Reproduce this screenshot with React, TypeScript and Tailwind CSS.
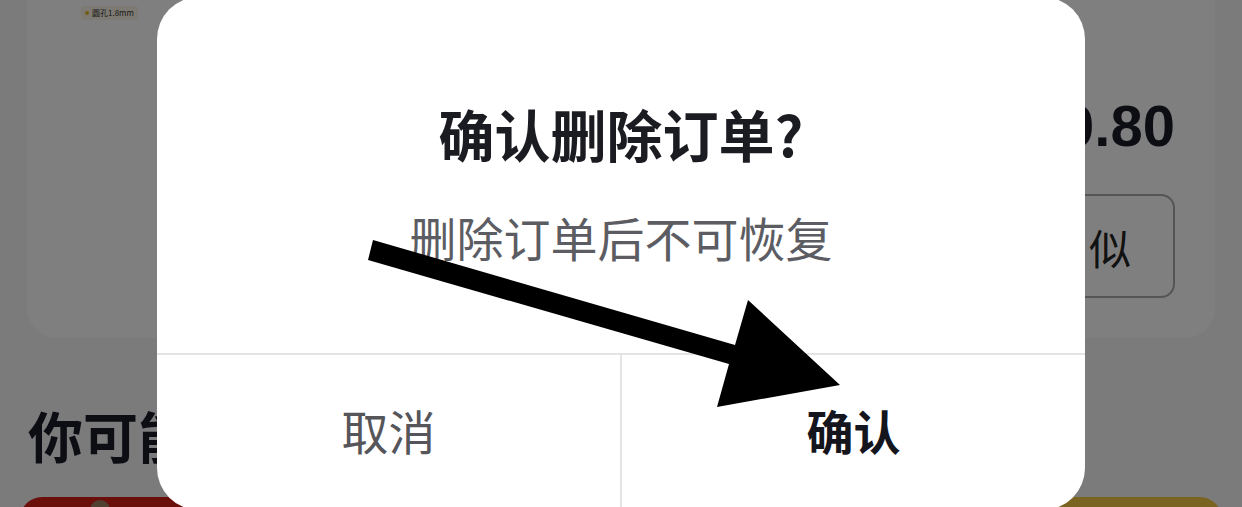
import React from "react";

const cjk = "font-['Noto_Sans_CJK_SC','Noto_Sans',sans-serif]";

function OrderCard() {
  return (
    <div className="mx-[27px] mt-[-60px] flex flex-col rounded-[30px] bg-white pt-[66px] pb-[40px]">
      <div className="ml-[54px] flex h-[14px] w-fit items-center gap-[3px] rounded-[3px] bg-[#fbf5e6] px-[4px]">
        <span className="h-[4px] w-[4px] rounded-full bg-[#e8b628]" />
        <span className="text-[8px] leading-none text-[#333]">圆孔1.8mm</span>
      </div>
      <div className="mt-[78px] self-end pr-[40px] font-['Liberation_Sans',sans-serif] text-[58px] font-bold leading-[56px] text-[#1a1a28]">
        ¥10.80
      </div>
      <button className="mt-[40px] mr-[40px] flex h-[104px] items-center self-end rounded-[14px] border-2 border-[#aaaaaa] pl-[44px] pr-[36px] text-[42px] tracking-[6px] text-[#222]">
        找相似
      </button>
    </div>
  );
}

function Recommend() {
  return (
    <div>
      <h2 className="mt-[68px] pl-[28px] text-[55px] font-bold leading-[56px] text-[#1a1a28]">你可能喜欢</h2>
      <div className="mt-[35px] grid grid-cols-2 gap-[18px] px-[20px]">
        <div className="relative h-[300px] rounded-t-[22px] bg-[#d61e14]">
          <span className="absolute left-[70px] top-[3px] h-[20px] w-[20px] rounded-full bg-[#a08060]" />
        </div>
        <div className="h-[300px] rounded-t-[22px] bg-[#f4c844]" />
      </div>
    </div>
  );
}

function ConfirmDialog() {
  return (
    <div className="absolute inset-0 flex items-center justify-center">
      <div className="flex h-[513px] w-[928px] flex-col overflow-hidden rounded-[42px] bg-white">
        <div className="flex h-[356px] flex-col items-center pt-[108px]">
          <h3 className="text-[56px] font-bold leading-[56px] text-[#1b1b22]">确认删除订单?</h3>
          <p className="mt-[52px] text-[47px] leading-[47px] text-[#5c5c63]">删除订单后不可恢复</p>
        </div>
        <div className="flex flex-1 border-t-2 border-[#e4e4e6]">
          <button className="flex flex-1 items-center justify-center pb-[4px] text-[47px] text-[#55555a]">取消</button>
          <div className="w-[2px] bg-[#e4e4e6]" />
          <button className="flex flex-1 items-center justify-center pb-[4px] text-[47px] font-bold text-[#15151d]">确认</button>
        </div>
      </div>
    </div>
  );
}

export default function App() {
  return (
    <div className={`relative h-[507px] w-[1242px] overflow-hidden bg-[#f6f6f8] ${cjk}`}>
      <OrderCard />
      <Recommend />
      <div className="absolute inset-0 bg-black/50" />
      <ConfirmDialog />
      <svg className="pointer-events-none absolute inset-0" width="1242" height="507" viewBox="0 0 1242 507">
        <polygon points="368,260 373,240 735,345 748,300 840,385 717,407 729,364" fill="#000" />
      </svg>
    </div>
  );
}
